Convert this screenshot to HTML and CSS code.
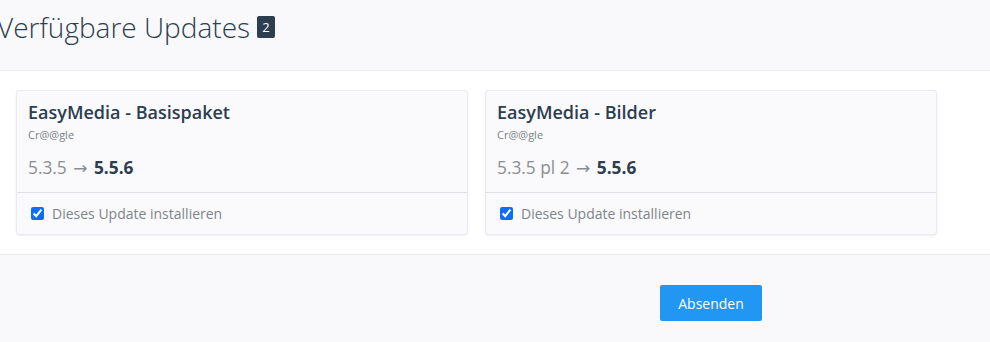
FILE: index.html
```html
<!DOCTYPE html>
<html lang="de">
<head>
<meta charset="utf-8">
<link rel="stylesheet" href="styles.css">
</head>
<body>
<header class="head">
  <h1 class="title">Verfügbare Updates <span class="badge">2</span></h1>
</header>
<main class="list">
  <div class="card">
    <div class="card-body">
      <div class="name">EasyMedia - Basispaket</div>
      <div class="author">Cr@@gle</div>
      <div class="version">5.3.5 <span class="arrow">→</span> <b>5.5.6</b></div>
    </div>
    <label class="card-foot"><input type="checkbox" checked> Dieses Update installieren</label>
  </div>
  <div class="card">
    <div class="card-body">
      <div class="name">EasyMedia - Bilder</div>
      <div class="author">Cr@@gle</div>
      <div class="version">5.3.5 pl 2 <span class="arrow">→</span> <b>5.5.6</b></div>
    </div>
    <label class="card-foot"><input type="checkbox" checked> Dieses Update installieren</label>
  </div>
</main>
<footer class="foot">
  <button class="submit">Absenden</button>
</footer>
</body>
</html>
```
FILE: styles.css
```css
html, body {
  margin: 0;
  padding: 0;
  background: #ffffff;
  font-family: "Open Sans", "Noto Sans", sans-serif;
  color: #2c3e50;
  overflow: hidden;
}
.head {
  height: 70px;
  background: #f9f9fb;
  border-bottom: 1px solid #ececef;
  box-sizing: content-box;
}
.title {
  margin: 0 0 0 -3px;
  padding-top: 8px;
  font-size: 28px;
  font-weight: 300;
  line-height: 38px;
  color: #2c3e50;
  display: flex;
  align-items: center;
}
.badge {
  display: inline-flex;
  align-items: center;
  justify-content: center;
  width: 18px;
  height: 22px;
  margin-left: 7px;
  margin-top: 0;
  background: #2c3e50;
  color: #fff;
  font-size: 13px;
  font-weight: 400;
  border-radius: 2px;
}
.list {
  display: flex;
  gap: 19px;
  padding: 20px 0 20px 17px;
  height: 143px;
}
.card {
  width: 450px;
  background: #fafafc;
  border-radius: 3px;
  box-shadow: 0 0 0 1px #ebebef, 0 1px 3px rgba(0,0,0,0.16);
  display: flex;
  flex-direction: column;
}
.card-body {
  padding: 9px 11px 12px;
  border-bottom: 1px solid #dfe0e5;
}
.name {
  font-size: 18px;
  font-weight: 600;
  line-height: 24px;
  color: #2c3e50;
}
.author {
  font-size: 11px;
  line-height: 22px;
  color: #7b7f85;
}
.version {
  margin-top: 10px;
  font-size: 17.3px;
  line-height: 24px;
  color: #8a8d92;
}
.arrow {
  font-family: "DejaVu Sans", sans-serif;
  font-size: 17px;
  line-height: 1;
  margin: 0 2px;
}
.version b {
  color: #2c3e50;
  font-weight: 700;
}
.card-foot {
  flex: 1;
  display: flex;
  align-items: center;
  padding: 0 13px 1px 14px;
  font-size: 14px;
  color: #80848a;
  gap: 8px;
}
.card-foot input {
  margin: 0;
  width: 13px;
  height: 13px;
  accent-color: #0d6efd;
}
.foot {
  border-top: 1px solid #ececef;
  background: #f9f9fb;
  height: 100px;
  padding-top: 30px;
  padding-left: 660px;
  box-sizing: border-box;
}
.submit {
  width: 102px;
  height: 36px;
  border: 0;
  border-radius: 2px;
  background: #2196f3;
  color: #fff;
  font-family: "Open Sans", "Noto Sans", sans-serif;
  font-size: 14px;
  padding: 0;
}
```
